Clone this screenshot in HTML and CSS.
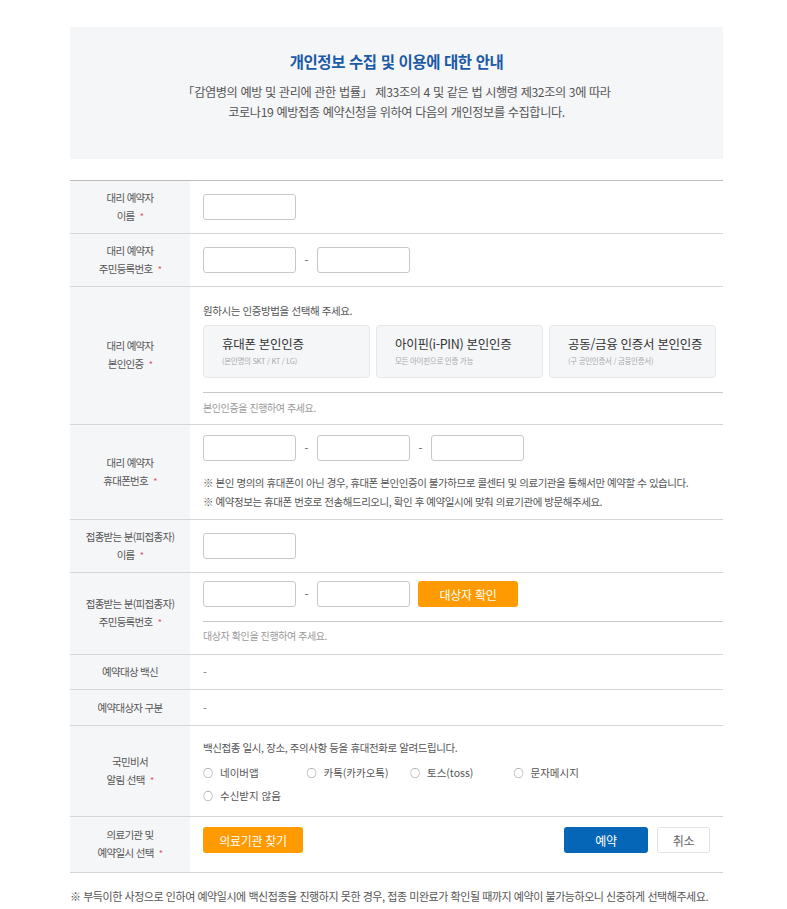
FILE: index.html
```html
<!DOCTYPE html>
<html lang="ko">
  <head>
    <meta charset="utf-8">
    <meta name="viewport" content="width=device-width,initial-scale=1">
    <title>코로나19 예방접종 예약</title>
    <link rel="stylesheet" href="styles.css">
  </head>
  <body>
    <div class="wrap">
      <div class="notice">
        <h2 class="notice-title">개인정보 수집 및 이용에 대한 안내</h2>
        <p class="notice-text">「감염병의 예방 및 관리에 관한 법률」 제33조의 4 및 같은 법 시행령 제32조의 3에 따라<br>코로나19 예방접종 예약신청을 위하여 다음의 개인정보를 수집합니다.</p>
      </div>

      <div class="form">
        <div class="row">
          <div class="label"><p>대리 예약자<br>이름 <span class="req">*</span></p></div>
          <div class="cell cell-input">
            <input class="field" type="text">
          </div>
        </div>

        <div class="row">
          <div class="label"><p>대리 예약자<br>주민등록번호 <span class="req">*</span></p></div>
          <div class="cell cell-input">
            <div class="inline">
              <input class="field" type="text"><span class="dash">-</span><input class="field" type="text">
            </div>
          </div>
        </div>

        <div class="row">
          <div class="label"><p>대리 예약자<br>본인인증 <span class="req">*</span></p></div>
          <div class="cell cell-auth">
            <p class="guide">원하시는 인증방법을 선택해 주세요.</p>
            <div class="auth-list">
              <div class="auth-card">
                <strong class="auth-name">휴대폰 본인인증</strong>
                <span class="auth-desc">(본인명의 SKT / KT / LG)</span>
              </div>
              <div class="auth-card">
                <strong class="auth-name">아이핀(i-PIN) 본인인증</strong>
                <span class="auth-desc">모든 아이핀으로 인증 가능</span>
              </div>
              <div class="auth-card">
                <strong class="auth-name">공동/금융 인증서 본인인증</strong>
                <span class="auth-desc">(구 공인인증서 / 금융인증서)</span>
              </div>
            </div>
            <p class="status">본인인증을 진행하여 주세요.</p>
          </div>
        </div>

        <div class="row">
          <div class="label"><p>대리 예약자<br>휴대폰번호 <span class="req">*</span></p></div>
          <div class="cell cell-phone">
            <div class="inline">
              <input class="field" type="text"><span class="dash">-</span><input class="field" type="text"><span class="dash">-</span><input class="field" type="text">
            </div>
            <ul class="notes">
              <li>※ 본인 명의의 휴대폰이 아닌 경우, 휴대폰 본인인증이 불가하므로 콜센터 및 의료기관을 통해서만 예약할 수 있습니다.</li>
              <li>※ 예약정보는 휴대폰 번호로 전송해드리오니, 확인 후 예약일시에 맞춰 의료기관에 방문해주세요.</li>
            </ul>
          </div>
        </div>

        <div class="row">
          <div class="label"><p>접종받는 분(피접종자)<br>이름 <span class="req">*</span></p></div>
          <div class="cell cell-input">
            <input class="field" type="text">
          </div>
        </div>

        <div class="row">
          <div class="label"><p>접종받는 분(피접종자)<br>주민등록번호 <span class="req">*</span></p></div>
          <div class="cell cell-target">
            <div class="inline">
              <input class="field" type="text"><span class="dash">-</span><input class="field" type="text">
              <button class="btn btn-orange btn-check" type="button">대상자 확인</button>
            </div>
            <p class="status status-target">대상자 확인을 진행하여 주세요.</p>
          </div>
        </div>

        <div class="row row-short">
          <div class="label"><p>예약대상 백신</p></div>
          <div class="cell cell-text">-</div>
        </div>

        <div class="row row-short">
          <div class="label"><p>예약대상자 구분</p></div>
          <div class="cell cell-text">-</div>
        </div>

        <div class="row">
          <div class="label"><p>국민비서<br>알림 선택 <span class="req">*</span></p></div>
          <div class="cell cell-alarm">
            <p class="guide">백신접종 일시, 장소, 주의사항 등을 휴대전화로 알려드립니다.</p>
            <ul class="radios">
              <li><span class="radio">○</span>네이버앱</li>
              <li><span class="radio">○</span>카톡(카카오톡)</li>
              <li><span class="radio">○</span>토스(toss)</li>
              <li><span class="radio">○</span>문자메시지</li>
              <li><span class="radio">○</span>수신받지 않음</li>
            </ul>
          </div>
        </div>

        <div class="row">
          <div class="label"><p>의료기관 및<br>예약일시 선택 <span class="req">*</span></p></div>
          <div class="cell cell-actions">
            <button class="btn btn-orange" type="button">의료기관 찾기</button>
            <div class="actions">
              <button class="btn btn-blue" type="button">예약</button>
              <button class="btn btn-white" type="button">취소</button>
            </div>
          </div>
        </div>
      </div>

      <p class="footnote">※ 부득이한 사정으로 인하여 예약일시에 백신접종을 진행하지 못한 경우, 접종 미완료가 확인될 때까지 예약이 불가능하오니 신중하게 선택해주세요.</p>
    </div>
  </body>
</html>
```

FILE: styles.css
```css
* {
  box-sizing: border-box;
  margin: 0;
  padding: 0;
}

body {
  background: #fff;
  color: #555;
  font-family: "Noto Sans CJK KR", "Noto Sans", sans-serif;
  font-size: 11px;
}

ul {
  list-style: none;
}

.wrap {
  margin: 27px 0 0 70px;
  width: 653px;
}

/* notice */
.notice {
  background: #f5f6f8;
  height: 132px;
  padding-top: 22px;
  text-align: center;
}

.notice-title {
  color: #1b5aa6;
  font-size: 15.5px;
  font-weight: bold;
  line-height: 24px;
  letter-spacing: -0.4px;
}

.notice-text {
  color: #555;
  font-size: 12.2px;
  letter-spacing: -0.4px;
  line-height: 20px;
  margin-top: 9px;
}

/* form rows */
.form {
  border-top: 1px solid #bdbdbd;
  margin-top: 21px;
}

.row {
  border-bottom: 1px solid #d6d6d6;
  display: grid;
  grid-template-columns: 120px 1fr;
}

.label {
  align-items: center;
  background: #f5f6f8;
  display: flex;
  font-size: 10.5px;
  justify-content: center;
  letter-spacing: -0.7px;
  line-height: 18px;
  text-align: center;
}

.req {
  color: #e0506b;
  font-size: 9px;
  margin-left: 3px;
}

.cell {
  padding-left: 13px;
}

.cell-input {
  padding-bottom: 13px;
  padding-top: 13px;
}

.inline {
  align-items: center;
  display: flex;
}

.field {
  background: #fff;
  border: 1px solid #c8c8c8;
  border-radius: 3px;
  display: block;
  height: 26px;
  width: 93px;
}

.dash {
  color: #555;
  font-size: 11px;
  text-align: center;
  width: 21px;
}

.guide {
  color: #555;
  font-size: 10.5px;
  letter-spacing: -0.4px;
  line-height: 18px;
}

.status {
  border-top: 1px solid #c8c8c8;
  color: #999;
  font-size: 10px;
  letter-spacing: -0.4px;
  line-height: 18px;
}

/* auth */
.cell-auth {
  padding-top: 15px;
}

.auth-list {
  display: grid;
  gap: 6px;
  grid-template-columns: repeat(3, 1fr);
  margin: 5px 7px 0 0;
}

.auth-card {
  background: #f5f6f8;
  border: 1px solid #e6e7e9;
  border-radius: 4px;
  display: flex;
  flex-direction: column;
  height: 53px;
  padding: 9px 0 0 18px;
}

.auth-name {
  color: #333;
  font-size: 12.5px;
  font-weight: normal;
  letter-spacing: -0.3px;
  line-height: 18px;
}

.auth-desc {
  color: #aaa;
  font-size: 7.5px;
  letter-spacing: -0.3px;
  line-height: 16px;
}

.cell-auth .status {
  margin-top: 14px;
  padding: 6px 0 7px;
}

/* phone */
.cell-phone {
  padding: 10px 0 8px 13px;
}

.notes {
  color: #555;
  font-size: 10.5px;
  letter-spacing: -0.45px;
  line-height: 19px;
  margin-top: 12px;
}

/* target */
.cell-target {
  padding-top: 8px;
}

.btn {
  border: 0;
  border-radius: 3px;
  color: #fff;
  cursor: pointer;
  font-family: inherit;
  font-size: 12px;
  height: 26px;
  letter-spacing: -0.3px;
}

.btn-orange {
  background: #ff9a00;
  width: 100px;
}

.btn-check {
  margin-left: 8px;
}

.status-target {
  margin-top: 14px;
  padding: 5px 0 9px;
}

/* plain text rows */
.cell-text {
  align-items: center;
  color: #777;
  display: flex;
  font-size: 11px;
}

.row-short {
  height: 35px;
}

.row-short + .row-short {
  height: 36px;
}

/* alarm */
.cell-alarm {
  padding: 13px 0 9px 13px;
}

.cell-alarm .guide {
  margin-bottom: 4px;
}

.radios {
  display: grid;
  font-size: 10.5px;
  grid-template-columns: repeat(4, 103.5px);
  line-height: 23px;
}

.radio {
  color: #777;
  font-size: 10px;
  margin-right: 7px;
}

/* actions */
.cell-actions {
  align-items: flex-start;
  display: flex;
  justify-content: space-between;
  padding: 10px 13px 19px 13px;
}

.actions {
  display: flex;
  gap: 9px;
}

.btn-blue {
  background: #0565b7;
  width: 84px;
}

.btn-white {
  background: #fff;
  border: 1px solid #e2e2e2;
  color: #666;
  width: 53px;
}

.footnote {
  color: #555;
  font-size: 11px;
  letter-spacing: -0.45px;
  line-height: 18px;
  margin-top: 14px;
}
```
